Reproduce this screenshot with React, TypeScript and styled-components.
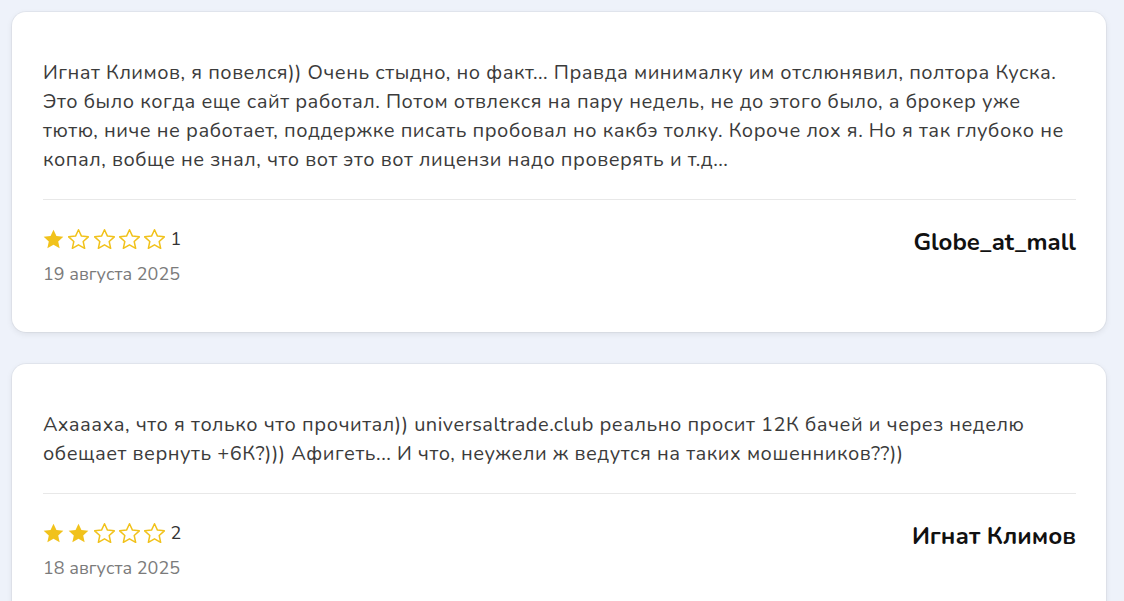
import React from 'react';
import styled, { createGlobalStyle } from 'styled-components';

const GlobalStyle = createGlobalStyle`
  body {
    margin: 0;
    background: #eef2fa;
    font-family: 'Nunito', 'Lato', 'Noto Sans', sans-serif;
  }
`;

type Review = {
  text: string;
  rating: number;
  date: string;
  author: string;
};

const reviews: Review[] = [
  {
    text: 'Игнат Климов, я повелся)) Очень стыдно, но факт... Правда минималку им отслюнявил, полтора Куска. Это было когда еще сайт работал. Потом отвлекся на пару недель, не до этого было, а брокер уже тютю, ниче не работает, поддержке писать пробовал но какбэ толку. Короче лох я. Но я так глубоко не копал, вобще не знал, что вот это вот лицензи надо проверять и т.д...',
    rating: 1,
    date: '19 августа 2025',
    author: 'Globe_at_mall',
  },
  {
    text: 'Ахаааха, что я только что прочитал)) universaltrade.club реально просит 12К бачей и через неделю обещает вернуть +6К?))) Афигеть... И что, неужели ж ведутся на таких мошенников??))',
    rating: 2,
    date: '18 августа 2025',
    author: 'Игнат Климов',
  },
];

const Star = ({ filled }: { filled: boolean }) => (
  <svg width="21" height="21" viewBox="1.5 1.5 21 21">
    <path
      d="M12 2.3l2.95 6.3 6.9.75-5.15 4.65 1.45 6.8L12 17.3l-6.15 3.5 1.45-6.8L2.15 9.35l6.9-.75z"
      fill={filled ? '#f1c21b' : 'none'}
      stroke="#f1c21b"
      strokeWidth={filled ? 0 : 1.5}
      strokeLinejoin="round"
    />
  </svg>
);

const App = () => {
  return (
    <>
      <GlobalStyle />
      <Page>
        {reviews.map((r, i) => (
          <Card key={i}>
            <Text>{r.text}</Text>
            <Divider />
            <Footer>
              <Meta>
                <Stars>
                  {[1, 2, 3, 4, 5].map((n) => (
                    <Star key={n} filled={n <= r.rating} />
                  ))}
                  <Count>{r.rating}</Count>
                </Stars>
                <DateText>{r.date}</DateText>
              </Meta>
              <Author>{r.author}</Author>
            </Footer>
          </Card>
        ))}
      </Page>
    </>
  );
};

const Page = styled.div`
  display: flex;
  flex-direction: column;
  gap: 32px;
  padding: 12px 18px 12px 12px;
`;
const Card = styled.div`
  background: #fff;
  border-radius: 14px;
  box-shadow: 0 0 0 1px rgba(0, 0, 0, 0.04), 0 2px 6px rgba(0, 0, 0, 0.08);
  padding: 46px 30px 45px 31px;
`;
const Text = styled.div`
  color: #3b3b3b;
  font-size: 20px;
  letter-spacing: 0.5px;
  line-height: 29px;
`;
const Divider = styled.div`
  height: 1px;
  background: #e8e8e8;
  margin: 25px 0 28px;
`;
const Footer = styled.div`
  display: flex;
  justify-content: space-between;
  align-items: flex-start;
`;
const Meta = styled.div`
  display: flex;
  flex-direction: column;
  gap: 12px;
`;
const Stars = styled.div`
  display: flex;
  align-items: center;
  gap: 4.3px;
  height: 22px;
`;
const Count = styled.span`
  margin-left: 1px;
  color: #333;
  font-size: 18px;
`;
const DateText = styled.div`
  color: #7b7b7b;
  font-size: 18px;
  line-height: 25px;
`;
const Author = styled.div`
  color: #111;
  font-size: 24px;
  font-weight: 700;
  line-height: 28px;
`;

export default App;
